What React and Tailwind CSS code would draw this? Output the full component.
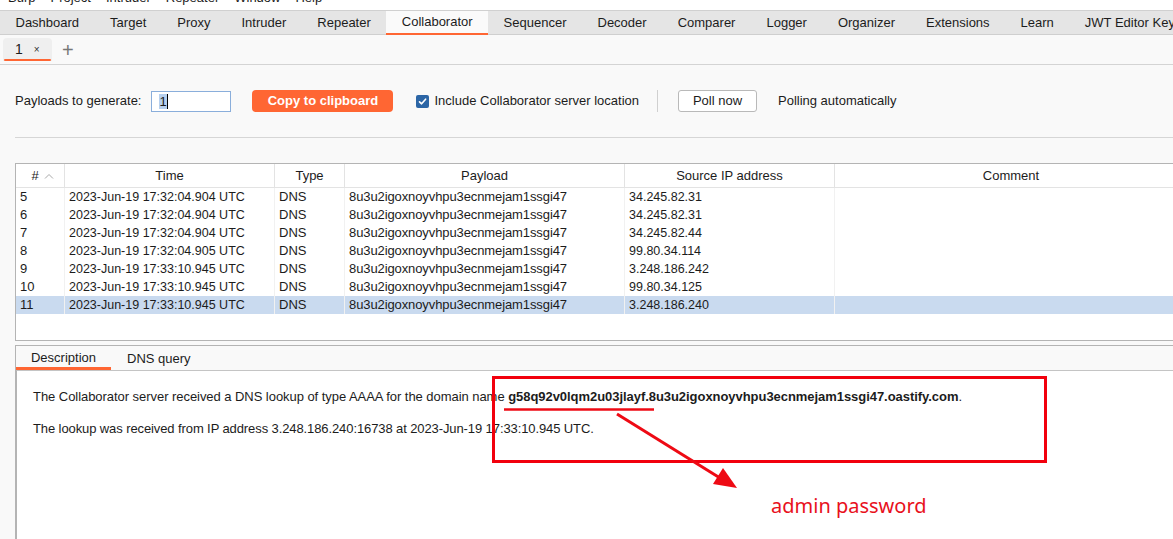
import { useState } from 'react';

const mainTabs = [
  'Dashboard', 'Target', 'Proxy', 'Intruder', 'Repeater', 'Collaborator',
  'Sequencer', 'Decoder', 'Comparer', 'Logger', 'Organizer', 'Extensions', 'Learn', 'JWT Editor Keys',
];

const rows = [
  { id: 5, time: '2023-Jun-19 17:32:04.904 UTC', ip: '34.245.82.31' },
  { id: 6, time: '2023-Jun-19 17:32:04.904 UTC', ip: '34.245.82.31' },
  { id: 7, time: '2023-Jun-19 17:32:04.904 UTC', ip: '34.245.82.44' },
  { id: 8, time: '2023-Jun-19 17:32:04.905 UTC', ip: '99.80.34.114' },
  { id: 9, time: '2023-Jun-19 17:33:10.945 UTC', ip: '3.248.186.242' },
  { id: 10, time: '2023-Jun-19 17:33:10.945 UTC', ip: '99.80.34.125' },
  { id: 11, time: '2023-Jun-19 17:33:10.945 UTC', ip: '3.248.186.240' },
];

const cols = 'grid grid-cols-[49px_210px_70px_280px_210px_352px]';

function App() {
  const [selected, setSelected] = useState(11);

  return (
    <div className="relative w-[1173px] h-[539px] overflow-hidden bg-[#f9f9f9] text-[13px] text-[#1c1c1c] font-['Liberation_Sans',Arial,sans-serif]">
      {/* Menu bar (cut off at the top of the shot) */}
      <div className="h-[10px] overflow-hidden bg-white">
        <div className="flex gap-[15px] pl-[8px] -mt-[10px] leading-[16px]">
          <span>Burp</span>
          <span>Project</span>
          <span>Intruder</span>
          <span>Repeater</span>
          <span>Window</span>
          <span>Help</span>
        </div>
      </div>

      {/* Main tabs */}
      <div className="flex h-[25px] bg-[#e5e5e5] border-t border-[#d0d0d0] border-b border-b-[#cfcfcf] whitespace-nowrap">
        {mainTabs.map((t) => (
          <div
            key={t}
            className={
              t === 'Collaborator'
                ? 'px-[15.5px] flex items-center bg-[#fafafa] border-b-2 border-[#ff6633] -mb-px'
                : 'px-[15.5px] flex items-center'
            }
          >
            {t}
          </div>
        ))}
      </div>

      {/* Sub tabs */}
      <div className="flex items-center h-[30px] border-b border-[#d4d4d4] pl-[3px]">
        <div className="relative flex items-center gap-[11px] h-[23px] w-[49px] pl-[12px] rounded-t-[4px] bg-[#efefef]">
          <span className="text-[14px]">1</span>
          <span className="text-[10px] text-[#333]">×</span>
          <div className="absolute left-[1px] right-[1px] bottom-0 h-[2px] rounded bg-[#ff6633]" />
        </div>
        <span className="ml-[10px] text-[20px] leading-none text-[#777] font-light">+</span>
      </div>

      {/* Toolbar */}
      <div className="ml-[15px] h-[73px] flex items-center border-b border-[#d6d6d6]">
        <span>Payloads to generate:</span>
        <div className="ml-[10px] w-[80px] h-[21px] bg-white border border-[#8aaedb] flex items-center pl-[7px]">
          <span className="bg-[#b7d0ee] leading-[15px]">1</span>
          <span className="w-px h-[15px] bg-black" />
        </div>
        <button className="ml-[21px] w-[141px] h-[22px] rounded-[4px] bg-[#ff6633] text-white font-bold">
          Copy to clipboard
        </button>
        <span className="ml-[23px] w-[13px] h-[13px] rounded-[2px] bg-[#2c66a6] flex items-center justify-center">
          <svg width="9" height="9" viewBox="0 0 9 9" fill="none">
            <path d="M1.5 4.8 L3.6 6.8 L7.6 2.2" stroke="white" strokeWidth="1.6" strokeLinecap="round" strokeLinejoin="round" />
          </svg>
        </span>
        <span className="ml-[5px]">Include Collaborator server location</span>
        <span className="ml-[18px] w-px h-[22px] bg-[#d0d0d0]" />
        <button className="ml-[20px] w-[79px] h-[22px] rounded-[3px] bg-white border border-[#b9b9b9]">
          Poll now
        </button>
        <span className="ml-[21px]">Polling automatically</span>
      </div>

      {/* Interactions table */}
      <div className="ml-[15px] mt-[25px] w-[1171px] bg-white border-t border-l border-b border-[#b4b4b4]">
        <div className={`${cols} h-[24px] border-b border-[#e3e3e3]`}>
          <div className="flex items-center justify-center gap-[5px] border-r border-[#e3e3e3] pl-[5px]">
            <span>#</span>
            <svg width="10" height="6" viewBox="0 0 10 6" fill="none">
              <path d="M1 5.5 L5 1.5 L9 5.5" stroke="#a8a8a8" strokeWidth="1" />
            </svg>
          </div>
          <div className="flex items-center justify-center border-r border-[#e3e3e3]">Time</div>
          <div className="flex items-center justify-center border-r border-[#e3e3e3]">Type</div>
          <div className="flex items-center justify-center border-r border-[#e3e3e3]">Payload</div>
          <div className="flex items-center justify-center border-r border-[#e3e3e3]">Source IP address</div>
          <div className="flex items-center justify-center">Comment</div>
        </div>
        {rows.map((r) => (
          <div
            key={r.id}
            onClick={() => setSelected(r.id)}
            className={`${cols} h-[18px] leading-[18px] whitespace-nowrap ${selected === r.id ? 'bg-[#c9daef]' : ''}`}
          >
            <div className="pl-[4px] border-r border-[#f1f1f1]">{r.id}</div>
            <div className="pl-[4px] border-r border-[#f1f1f1] text-[12.5px]">{r.time}</div>
            <div className="pl-[4px] border-r border-[#f1f1f1]">DNS</div>
            <div className="pl-[4px] border-r border-[#f1f1f1] tracking-[-0.1px]">8u3u2igoxnoyvhpu3ecnmejam1ssgi47</div>
            <div className="pl-[4px] border-r border-[#f1f1f1] text-[12.5px]">{r.ip}</div>
            <div />
          </div>
        ))}
        <div className="h-[26px]" />
      </div>

      {/* Detail panel */}
      <div className="ml-[15px] mt-[4px] border-t border-l border-[#b4b4b4] h-[200px] flex flex-col">
        <div className="flex h-[24px] items-stretch bg-[#f9f9f9]">
          <div className="w-[95px] flex items-center justify-center border-b-[3px] border-[#ff6633] pt-[2px]">Description</div>
          <div className="ml-[16px] flex items-center pt-[1px]">DNS query</div>
        </div>
        <div className="flex-1 bg-white border-t border-[#c4c4c4] border-l border-l-[#b4b4b4] pl-[16px] pt-[18px] leading-[16px]">
          <p className="tracking-[-0.05px]">
            The Collaborator server received a DNS lookup of type AAAA for the domain name{' '}
            <b>g58q92v0lqm2u03jlayf.8u3u2igoxnoyvhpu3ecnmejam1ssgi47.oastify.com</b>.
          </p>
          <p className="mt-[16px] tracking-[-0.1px]">
            The lookup was received from IP address 3.248.186.240:16738 at 2023-Jun-19 17:33:10.945 UTC.
          </p>
        </div>
      </div>

      {/* Red annotation */}
      <div className="absolute left-[492px] top-[376px] w-[555px] h-[87px] border-[3px] border-[#f2000d]" />
      <svg className="absolute left-0 top-0 pointer-events-none" width="1173" height="539">
        <line x1="504" y1="409.5" x2="654" y2="409.5" stroke="#ee0a14" strokeWidth="2.5" />
        <line x1="617" y1="414" x2="720" y2="478" stroke="#ee0a14" strokeWidth="3" />
        <polygon points="737,488 713,484 723,468" fill="#ee0a14" />
      </svg>
      <div className="absolute left-[771px] top-[492px] text-[20px] leading-[28px] text-[#e8101c] font-['Noto_Sans',sans-serif]">
        admin password
      </div>
    </div>
  );
}

export default App;
